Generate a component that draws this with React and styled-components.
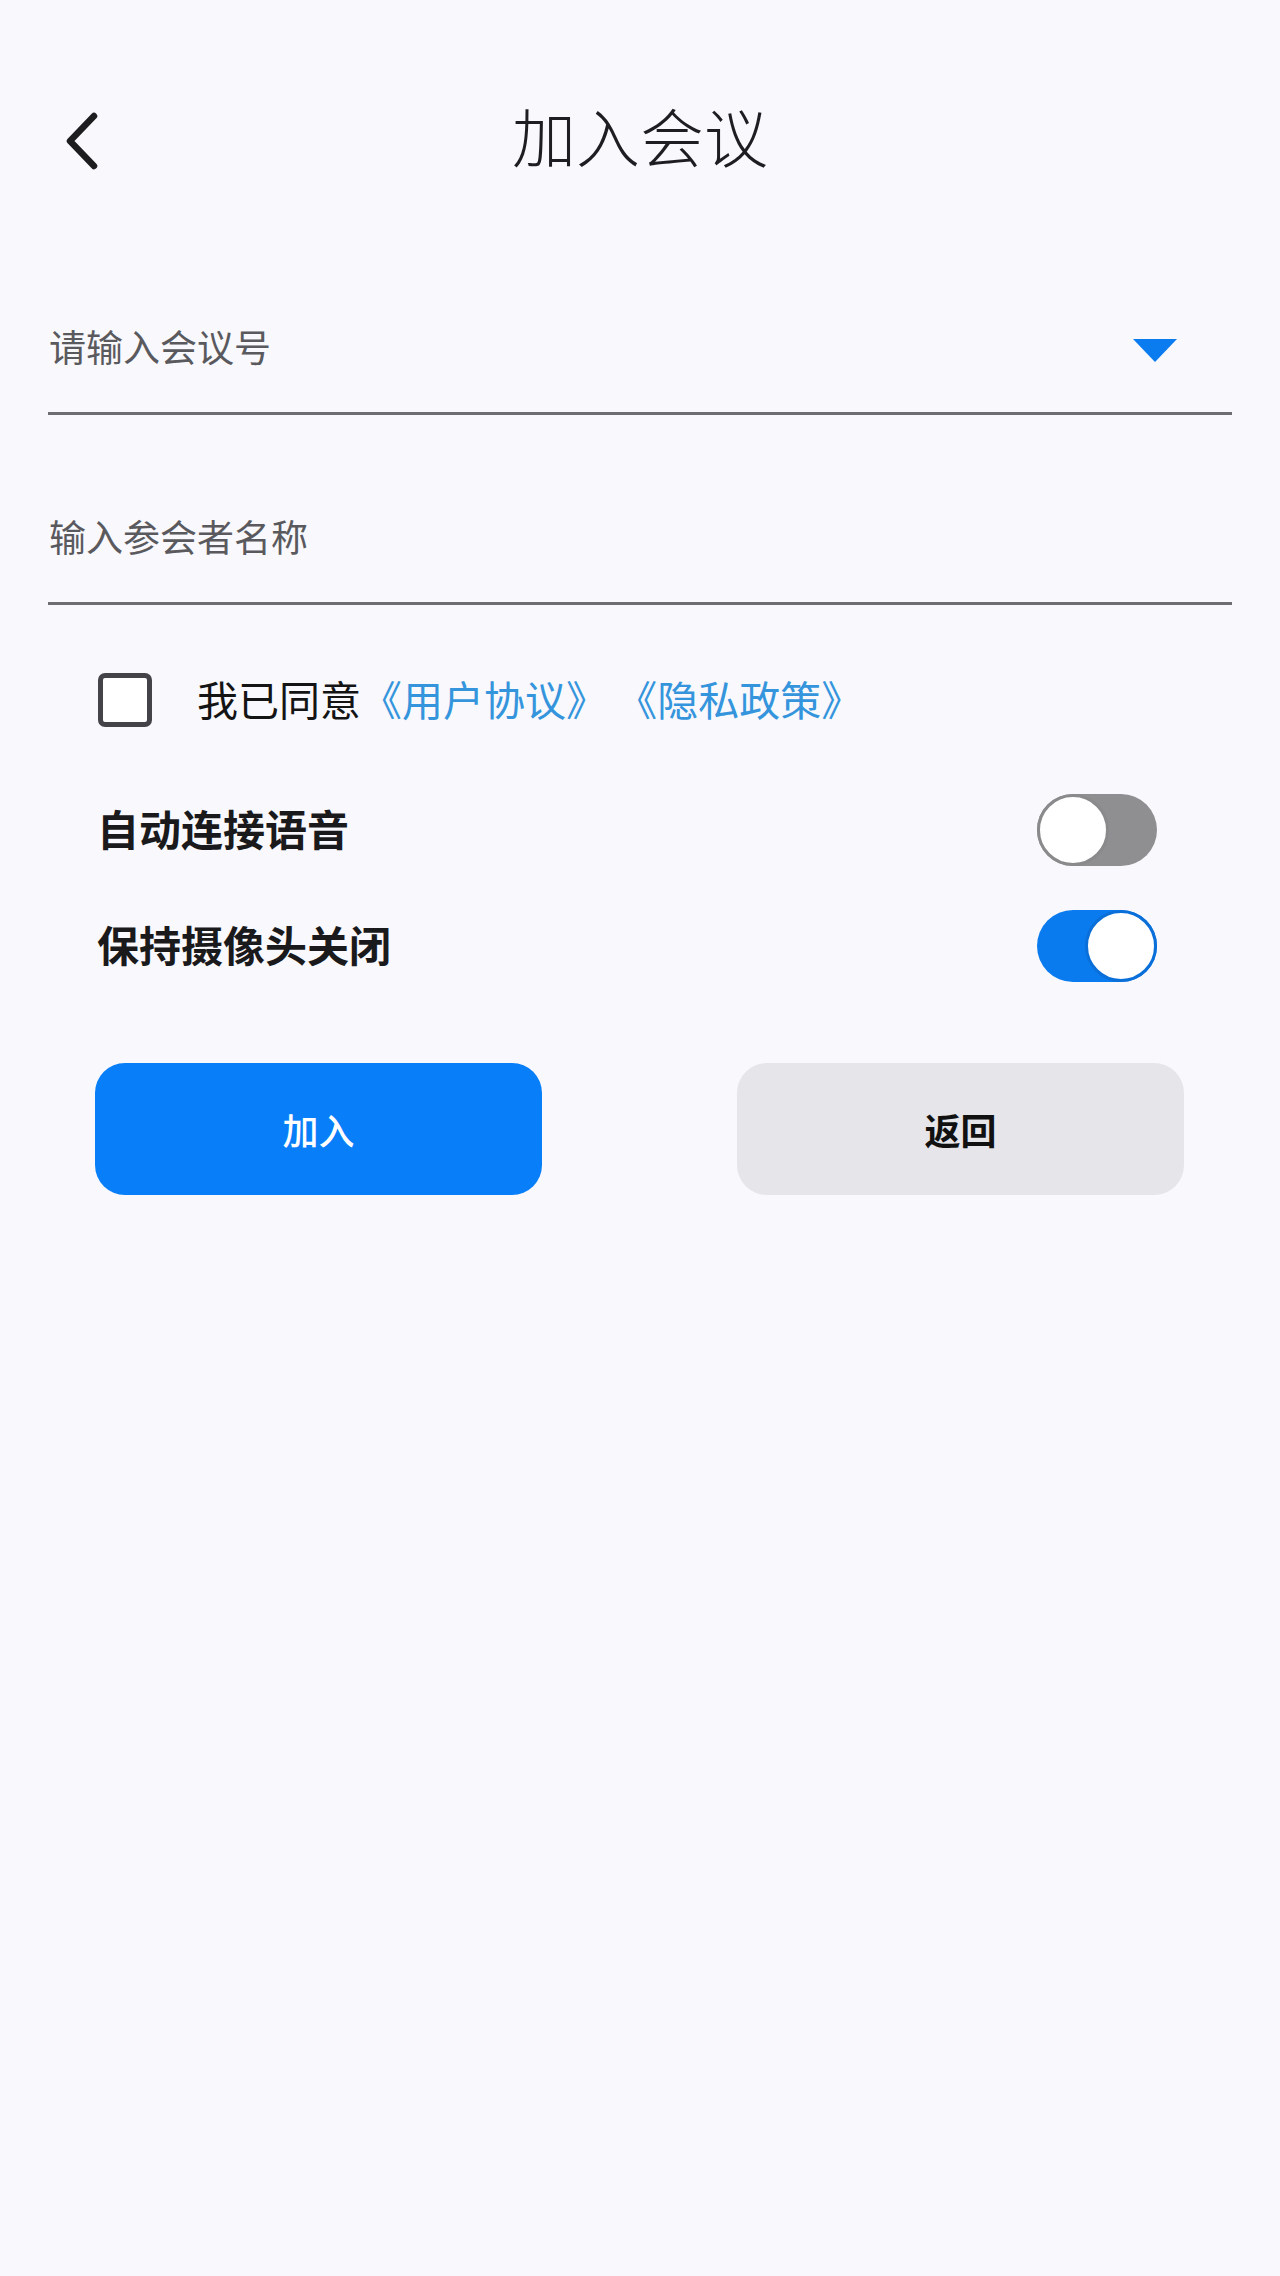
import React, { useState } from 'react';
import styled, { createGlobalStyle } from "styled-components";

const GlobalStyle = createGlobalStyle`
    html, body {
        margin: 0;
        padding: 0;
        background-color: #f8f8fd;
    }
    body {
        font-family: "Noto Sans CJK SC", "Noto Sans", sans-serif;
    }
`;

const Page = styled.div`
    min-height: 2276px;
    background-color: #f8f8fd;
    display: flex;
    flex-direction: column;
`;

const Header = styled.div`
    position: relative;
    height: 282px;
    display: flex;
    align-items: center;
    justify-content: center;
`;

const BackButton = styled.button`
    position: absolute;
    left: 54px;
    top: 104px;
    width: 50px;
    height: 74px;
    padding: 0;
    border: none;
    background: transparent;
    display: flex;
    align-items: center;
    justify-content: center;
    cursor: pointer;
`;

const Title = styled.h1`
    margin: 0 0 14px 0;
    font-size: 64px;
    font-weight: 300;
    color: #1d1d22;
    letter-spacing: 0;
    line-height: 1;
`;

const Form = styled.div`
    display: flex;
    flex-direction: column;
    padding: 34px 48px 0 48px;
    gap: 91px;
`;

const Field = styled.div`
    display: flex;
    align-items: center;
    height: 60px;
    padding: 0 0 36px 1px;
    border-bottom: 3px solid #6e6e72;
`;

const Input = styled.input`
    flex: 1;
    border: none;
    outline: none;
    background: transparent;
    font-family: inherit;
    font-size: 37px;
    color: #222;
    padding: 0;

    &::placeholder {
        color: #5a5a5e;
    }
`;

const Caret = styled.div`
    width: 0;
    height: 0;
    margin: 8px 55px 0 0;
    border-left: 22px solid transparent;
    border-right: 22px solid transparent;
    border-top: 23px solid #0a7cf0;
`;

const AgreeRow = styled.label`
    display: flex;
    align-items: center;
    gap: 45px;
    margin: 68px 0 0 98px;
    height: 54px;
    cursor: pointer;
`;

const CheckBox = styled.span`
    box-sizing: border-box;
    width: 54px;
    height: 54px;
    border: 5px solid #444448;
    border-radius: 7px;
    background: #fff;
`;

const AgreeText = styled.span`
    font-size: 41px;
    color: #141414;
    white-space: pre;
    padding-bottom: 5px;
`;

const Link = styled.span`
    color: #3595dc;
`;

const Options = styled.div`
    display: flex;
    flex-direction: column;
    margin-top: 45px;
    padding: 0 123px 0 97px;
`;

const OptionRow = styled.div`
    display: flex;
    align-items: center;
    justify-content: space-between;
    height: 116px;
`;

const OptionLabel = styled.span`
    font-size: 42px;
    font-weight: 700;
    color: #1a1a1c;
    padding-bottom: 5px;
`;

const Switch = styled.button`
    box-sizing: border-box;
    width: 120px;
    height: 72px;
    padding: 0;
    border: none;
    border-radius: 36px;
    background-color: ${p => (p.$on ? '#0a7bee' : '#8f8f91')};
    display: flex;
    justify-content: ${p => (p.$on ? 'flex-end' : 'flex-start')};
    align-items: center;
    cursor: pointer;
`;

const Knob = styled.span`
    box-sizing: border-box;
    width: 72px;
    height: 72px;
    border-radius: 50%;
    background: #fff;
    border: 3px solid ${p => (p.$on ? '#0a6fd8' : '#8a8a8c')};
`;

const Actions = styled.div`
    display: grid;
    grid-template-columns: 447px 447px;
    justify-content: space-between;
    margin-top: 59px;
    padding: 0 96px 0 95px;
`;

const ActionButton = styled.button`
    height: 132px;
    border: none;
    border-radius: 30px;
    font-family: inherit;
    font-size: 36px;
    font-weight: ${p => (p.$primary ? 500 : 700)};
    color: ${p => (p.$primary ? '#ffffff' : '#111111')};
    background-color: ${p => (p.$primary ? '#087ef8' : '#e5e5ea')};
    cursor: pointer;
`;

function BackIcon() {
    return (
        <svg width="40" height="60" viewBox="0 0 40 60">
            <path d="M35 5 L11 30 L35 55" fill="none" stroke="#1d1d20" strokeWidth="6.5" strokeLinecap="round" strokeLinejoin="round" />
        </svg>
    );
}

function Toggle({ initial }) {
    const [on, setOn] = useState(initial);
    return (
        <Switch $on={on} onClick={() => setOn(!on)}>
            <Knob $on={on} />
        </Switch>
    );
}

function App() {
    return (
        <Page>
            <GlobalStyle />
            <Header>
                <BackButton>
                    <BackIcon />
                </BackButton>
                <Title>加入会议</Title>
            </Header>
            <Form>
                <Field>
                    <Input placeholder="请输入会议号" />
                    <Caret />
                </Field>
                <Field>
                    <Input placeholder="输入参会者名称" />
                </Field>
            </Form>
            <AgreeRow>
                <CheckBox />
                <AgreeText>
                    我已同意<Link>《用户协议》 《隐私政策》</Link>
                </AgreeText>
            </AgreeRow>
            <Options>
                <OptionRow>
                    <OptionLabel>自动连接语音</OptionLabel>
                    <Toggle initial={false} />
                </OptionRow>
                <OptionRow>
                    <OptionLabel>保持摄像头关闭</OptionLabel>
                    <Toggle initial={true} />
                </OptionRow>
            </Options>
            <Actions>
                <ActionButton $primary>加入</ActionButton>
                <ActionButton>返回</ActionButton>
            </Actions>
        </Page>
    );
}

export default App;
